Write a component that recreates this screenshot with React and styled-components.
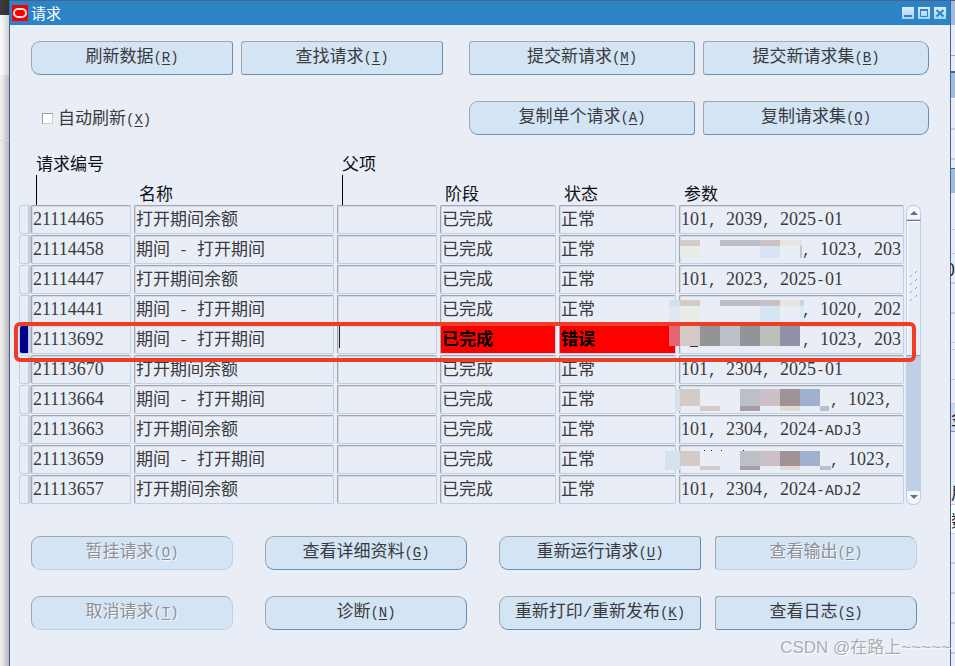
import React from "react";
import styled, { createGlobalStyle, css } from "styled-components";

const c = {
  face: "#e9eef6",
  title: "#2c84c4",
  edge: "#4a6194",
  pale: "#bfd0e6",
  gray: "#a4a6aa",
  button: "#d3e4f4",
  text: "#3a3a3e",
};

const GlobalStyle = createGlobalStyle`
  *, *::before, *::after { box-sizing: border-box; }
  body {
    margin: 0;
    overflow: hidden;
    background: ${c.face};
    color: ${c.text};
    font-family: "Noto Sans CJK SC", sans-serif;
    font-size: 17px;
  }
  button, input { font: inherit; color: inherit; }
`;

const Desktop = styled.div`
  position: relative;
  display: grid;
  grid-template-columns: 9px minmax(0, 1fr) 4px;
  height: 100vh;
  min-height: 640px;
  overflow: hidden;
`;

const LeftEdge = styled.div`
  display: flex;
  flex-direction: column;
  overflow: hidden;
`;

const Strip = styled.div`
  flex: ${(p) => (p.$h ? `0 0 ${p.$h}px` : "1")};
  background: linear-gradient(90deg, ${(p) => p.$color} 20%, ${(p) => p.$shade});
  border-bottom: ${(p) => (p.$line ? "1px solid #d6d6d6" : "0")};
`;

const RightEdge = styled.div`
  display: flex;
  flex-direction: column;
  overflow: hidden;
`;

const Band = styled.div`
  flex: 0 0 ${(p) => p.$h}px;
  overflow: hidden;
  background: ${(p) => p.$bg || c.face};
  border-bottom: ${(p) => p.$bw || 1}px solid ${(p) => p.$line || c.pale};
  color: #202024;
  direction: ${(p) => (p.$tail ? "rtl" : "ltr")};
  line-height: ${(p) => p.$h}px;
  white-space: nowrap;
`;

const Window = styled.main`
  display: flex;
  flex-direction: column;
  border: 1px solid ${c.edge};
  border-bottom: 0;
  background: ${c.face};
  overflow: hidden;
`;

const TitleBar = styled.header`
  display: flex;
  align-items: center;
  gap: 3px;
  height: 24px;
  padding: 0 4px 0 2px;
  background: ${c.title};
  color: #fff;
`;

const Title = styled.h1`
  flex: 1;
  margin: 0;
  font-size: 15px;
  font-weight: 400;
  line-height: 24px;
`;

const Controls = styled.div`
  display: flex;
  gap: 4px;
`;

const ControlButton = styled.button`
  display: block;
  width: 12px;
  height: 12px;
  padding: 0;
  border: 0;
  background: linear-gradient(#dceefb, #a4d2f1);
  svg { display: block; }
`;

const Toolbar = styled.div`
  display: flex;
  align-items: center;
  gap: 26px;
  margin-top: ${(p) => p.$top}px;
  padding: 0 21px;
`;

const Group = styled.div`
  display: flex;
  align-items: center;
  flex: ${(p) => p.$grow} 1 0;
  gap: 8px;
  min-width: 0;
`;

const corners = {
  left: "9px 3px 3px 9px",
  right: "3px 9px 9px 3px",
  all: "9px",
  none: "3px",
};

const PushButton = styled.button`
  flex: 1 1 0;
  min-width: 0;
  height: 34px;
  padding: 0 0 4px;
  border: 1px solid;
  border-color: ${c.gray} #6b8db2 #6b8db2 ${c.gray};
  border-radius: ${(p) => corners[p.$corners]};
  background: ${c.button};
  line-height: 26px;
  white-space: nowrap;
  &:disabled {
    border-color: ${c.gray} ${c.pale} ${c.pale} ${c.gray};
    color: #8d9096;
    text-shadow: 1px 1px 0 #f4f8fc;
  }
`;

const Latin = styled.span`
  font-family: "Liberation Mono", monospace;
  font-size: 15px;
`;

const Digits = styled.span`
  font-family: "Liberation Serif", serif;
  font-size: 18px;
`;

const Hotkey = styled.span`
  font-family: "Liberation Mono", monospace;
  font-size: 14px;
  u { text-underline-offset: 2px; }
`;

const CheckLabel = styled.label`
  display: flex;
  align-items: center;
  gap: 5px;
  padding-left: 11px;
  line-height: 26px;
`;

const CheckBox = styled.input`
  appearance: none;
  width: 11px;
  height: 11px;
  margin: 0;
  border: 1px solid;
  border-color: #9c9c9c #c8c8c8 #c8c8c8 #9c9c9c;
  background: #fff;
`;

const Block = styled.section`
  position: relative;
  display: flex;
  gap: 2px;
  margin-top: 15px;
  padding: 0 29px 0 9px;
`;

const Table = styled.table`
  flex: 1;
  width: 0;
  table-layout: fixed;
  border-collapse: collapse;
`;

const Col = styled.col`
  width: ${(p) => p.$w}px;
`;

const Head = styled.th`
  height: 55px;
  padding: 0 0 0 5px;
  vertical-align: bottom;
  color: #101014;
  font-weight: 400;
  line-height: 24px;
  text-align: left;
  white-space: nowrap;
`;

const Stem = styled.span`
  display: block;
  width: 1px;
  height: 30px;
  background: #000;
`;

const Cell = styled.td`
  position: relative;
  height: 30px;
  padding: 0 ${(p) => (p.$last ? 0 : 3)}px 1px 0;
  vertical-align: top;
`;

const Field = styled.div`
  height: 29px;
  padding: 0 0 0 ${(p) => p.$indent || 1}px;
  overflow: hidden;
  border: 1px solid;
  border-color: ${c.gray} ${c.pale} ${c.pale} ${c.gray};
  border-radius: 2px;
  box-shadow: inset 1px 1px 0 #cfdbea;
  line-height: 24px;
  white-space: pre;
  ${(p) =>
    p.$error &&
    css`
      background: #f00;
      box-shadow: none;
      color: #000;
      font-weight: 700;
    `}
`;

const Selector = styled.div`
  height: 29px;
  border: 1px solid ${c.pale};
  border-right-width: 3px;
  border-radius: 3px;
  background: ${(p) => (p.$current ? "#00008b" : c.face)};
`;

const Caret = styled.span`
  display: block;
  width: 1px;
  height: 22px;
  background: #222;
`;

const Mosaic = styled.svg`
  position: absolute;
  top: 0;
  left: -15px;
  z-index: 1;
  pointer-events: none;
`;

const Highlight = styled.div`
  position: absolute;
  top: 172px;
  right: 34px;
  left: 4px;
  z-index: 2;
  height: 40px;
  border: 4px solid #ee3d26;
  border-radius: 6px;
  pointer-events: none;
`;

const ScrollBar = styled.div`
  display: flex;
  flex-direction: column;
  width: 15px;
  margin-top: 55px;
  border-radius: 7px;
  background: ${c.pale};
`;

const ScrollButton = styled.button`
  display: flex;
  align-items: center;
  justify-content: center;
  height: 15px;
  padding: 0;
  border: 1px solid ${c.pale};
  border-radius: ${(p) => (p.$end ? "2px 2px 7px 7px" : "7px 7px 0 0")};
  background: #f3f6fb;
`;

const Thumb = styled.div`
  display: flex;
  align-items: center;
  justify-content: center;
  height: 136px;
  border: 1px solid ${c.pale};
  border-top-color: #73738f;
  border-bottom-color: #8da6c8;
  background: ${c.face};
  box-shadow: inset 1px 1px 0 #fff;
`;

const Track = styled.div`
  flex: 1;
`;

const Footer = styled.div`
  display: grid;
  grid-template-columns: 234fr 234fr 216fr 202fr;
  row-gap: 26px;
  margin-top: 31px;
  padding: 0 33px 0 21px;
`;

const Slot = styled.div`
  display: flex;
  padding-right: ${(p) => p.$space}px;
`;

const Watermark = styled.div`
  position: absolute;
  right: 4px;
  bottom: 5px;
  z-index: 3;
  color: #a9adb4;
  font-family: "Liberation Sans", "Noto Sans CJK SC", sans-serif;
  font-size: 17px;
  line-height: 26px;
  text-shadow: 1px 1px 0 #fff;
  white-space: nowrap;
`;

function Button({ label, hotkey, corners: shape = "all", disabled }) {
  return (
    <PushButton type="button" $corners={shape} disabled={disabled}>
      <Mixed text={label} />
      <Hotkey>
        (<u>{hotkey}</u>)
      </Hotkey>
    </PushButton>
  );
}

// Digits, other ASCII characters and Chinese text each get their own face.
function Mixed({ text }) {
  return text.match(/[0-9]+|[^0-9\u0080-\uffff]+|[\u0080-\uffff]+/g).map((part, i) => {
    if (/^[0-9]/.test(part)) return <Digits key={i}>{part}</Digits>;
    if (/^[\x20-\x7e]/.test(part)) return <Latin key={i}>{part}</Latin>;
    return part;
  });
}

// Each block: x, y, width, height, colour.
const faint = [
  [16, 5, 20, 6, "#d4cac8"],
  [16, 11, 20, 12, "#e8ede6"],
  [56, 5, 40, 6, "#bcc0c6"],
  [96, 5, 20, 6, "#cbc0c6"],
  [116, 5, 20, 6, "#e8e6e0"],
  [96, 11, 20, 12, "#d5e5f4"],
];

const mosaics = {
  a: [...faint, [136, 5, 2, 6, "#d3e5f1"], [136, 11, 2, 12, "#cbbdd2"]],
  b: [
    ...faint,
    [16, 23, 20, 4, "#e8ede6"],
    [96, 23, 20, 4, "#d5e5f4"],
    [5, 5, 11, 6, "#d3e0ec"],
    [5, 11, 11, 16, "#dfe6f0"],
    [136, 5, 4, 6, "#c5d6ea"],
    [136, 11, 4, 16, "#dbebf4"],
  ],
  c: [
    [5, 1, 11, 20, "#e36670"],
    [16, 1, 20, 20, "#d4c9c7"],
    [36, 1, 20, 20, "#939497"],
    [56, 1, 20, 20, "#bcc0c7"],
    [76, 1, 20, 20, "#939497"],
    [96, 1, 20, 20, "#bdc0b9"],
    [116, 1, 20, 20, "#9191aa"],
    [26, 21, 8, 1, "#333"],
  ],
  d: [
    [11, 4, 5, 22, "#d5e1ec"],
    [16, 4, 20, 17, "#d4cac8"],
    [36, 21, 20, 5, "#d5cac8"],
    [76, 4, 20, 17, "#bcc0c6"],
    [76, 21, 20, 5, "#a89ba8"],
    [96, 4, 20, 17, "#cbc0c6"],
    [116, 4, 20, 17, "#9f9397"],
    [116, 21, 20, 5, "#e2d9cf"],
    [136, 4, 20, 17, "#a0b0cf"],
    [156, 21, 9, 5, "#bcc0c6"],
  ],
  e: [
    [1, 6, 15, 19, "#d5e1ec"],
    [16, 6, 20, 15, "#d4cac8"],
    [36, 21, 20, 4, "#d5cac8"],
    [76, 6, 20, 15, "#bcc0c6"],
    [76, 21, 20, 4, "#a89ba8"],
    [96, 6, 20, 15, "#cbc0c6"],
    [116, 6, 20, 15, "#9f9397"],
    [116, 21, 20, 4, "#e2d9cf"],
    [136, 6, 20, 15, "#a0b0cf"],
    [156, 21, 11, 4, "#bcc0c6"],
    [40, 5, 1, 1, "#222"],
    [47, 5, 1, 1, "#222"],
    [57, 5, 1, 1, "#222"],
    [79, 5, 1, 1, "#222"],
  ],
};

const balance = "打开期间余额";
const period = "期间 - 打开期间";

const rows = [
  { id: "21114465", name: balance, params: "101, 2039, 2025-01" },
  { id: "21114458", name: period, params: ", 1023, 203", indent: 122, mask: "a" },
  { id: "21114447", name: balance, params: "101, 2023, 2025-01" },
  { id: "21114441", name: period, params: ", 1020, 202", indent: 122, mask: "b" },
  { id: "21113692", name: period, params: ", 1023, 203", indent: 122, mask: "c", error: true },
  { id: "21113670", name: balance, params: "101, 2304, 2025-01" },
  { id: "21113664", name: period, params: ", 1023,", indent: 150, mask: "d" },
  { id: "21113663", name: balance, params: "101, 2304, 2024-ADJ3" },
  { id: "21113659", name: period, params: ", 1023,", indent: 150, mask: "e" },
  { id: "21113657", name: balance, params: "101, 2304, 2024-ADJ2" },
];

const bands = [
  { h: 1, line: c.edge },
  { h: 24, bg: "#9dbcdf", line: "#9dbcdf" },
  { h: 31, line: c.gray },
  { h: 17, line: c.edge, bw: 2 },
  { h: 26, bg: "#9dbcdf", line: "#fff" },
  { h: 31, bw: 2 },
  { h: 30, bw: 2 },
  { h: 9, line: c.edge },
  { h: 24, bg: "#9dbcdf", line: "#9dbcdf" },
  { h: 37 },
  { h: 24 },
  { h: 30, bw: 2, text: "0", tail: true },
  { h: 30, bw: 2 },
  { h: 29 },
  { h: 7 },
  { h: 30 },
  { h: 24 },
  { h: 28, bg: "#cbdaed", line: "#7f97bd", text: "金" },
  { h: 46, line: c.face },
  { h: 27, text: "用" },
  { h: 29, bg: "#fff", text: "数" },
  { h: 30, bw: 2 },
  { h: 30, bw: 2 },
  { h: 30, bw: 2 },
  { h: 30, bw: 2 },
  { h: 30, bw: 2 },
];

const cols = [12, 103, 203, 103, 119, 120];

export default function App() {
  return (
    <Desktop>
      <GlobalStyle />
      <LeftEdge>
        <Strip $h={15} $color="#3b3b3b" $shade="#303030" />
        <Strip $h={60} $color="#f8f8f8" $shade="#d0d0d0" />
        <Strip $h={66} $color="#ededed" $shade="#b8b8ba" $line />
        <Strip $color="#ebebeb" $shade="#b4b4b8" />
      </LeftEdge>

      <Window>
        <TitleBar>
          <svg width="16" height="16" viewBox="0 0 16 16" aria-hidden="true">
            <rect width="16" height="16" fill="#f80000" />
            <rect x="2" y="4" width="12" height="8" rx="4" fill="none" stroke="#ffe4e4" strokeWidth="2" />
          </svg>
          <Title>请求</Title>
          <Controls>
            <ControlButton type="button" aria-label="最小化">
              <svg width="12" height="12"><path d="M2 9h8" stroke={c.title} strokeWidth="2" /></svg>
            </ControlButton>
            <ControlButton type="button" aria-label="最大化">
              <svg width="12" height="12">
                <path d="M2.5 3h7v6.5h-7z" fill="none" stroke={c.title} />
                <path d="M2 3h8" stroke={c.title} strokeWidth="2" />
              </svg>
            </ControlButton>
            <ControlButton type="button" aria-label="关闭">
              <svg width="12" height="12">
                <path d="M2.5 3l7 6.5M9.5 3l-7 6.5" stroke={c.title} strokeWidth="2" />
              </svg>
            </ControlButton>
          </Controls>
        </TitleBar>

        <Toolbar $top={16}>
          <Group $grow={412}>
            <Button label="刷新数据" hotkey="R" corners="left" />
            <Button label="查找请求" hotkey="I" corners="none" />
          </Group>
          <Group $grow={460}>
            <Button label="提交新请求" hotkey="M" corners="none" />
            <Button label="提交新请求集" hotkey="B" corners="right" />
          </Group>
        </Toolbar>
        <Toolbar $top={26}>
          <Group $grow={412}>
            <CheckLabel>
              <CheckBox type="checkbox" />
              <span>
                自动刷新
                <Hotkey>
                  (<u>X</u>)
                </Hotkey>
              </span>
            </CheckLabel>
          </Group>
          <Group $grow={460}>
            <Button label="复制单个请求" hotkey="A" corners="left" />
            <Button label="复制请求集" hotkey="Q" corners="right" />
          </Group>
        </Toolbar>

        <Block>
          <Table>
            <colgroup>
              {cols.map((w, i) => (
                <Col key={i} $w={w} />
              ))}
              <col />
            </colgroup>
            <thead>
              <tr>
                <Head aria-label="当前行" />
                <Head>
                  请求编号
                  <Stem />
                </Head>
                <Head>名称</Head>
                <Head>
                  父项
                  <Stem />
                </Head>
                <Head>阶段</Head>
                <Head>状态</Head>
                <Head>参数</Head>
              </tr>
            </thead>
            <tbody>
              {rows.map((r) => (
                <tr key={r.id}>
                  <Cell $last>
                    <Selector $current={r.error} />
                  </Cell>
                  <Cell>
                    <Field><Mixed text={r.id} /></Field>
                  </Cell>
                  <Cell>
                    <Field><Mixed text={r.name} /></Field>
                  </Cell>
                  <Cell>
                    <Field>{r.error && <Caret />}</Field>
                  </Cell>
                  <Cell>
                    <Field $error={r.error}>已完成</Field>
                  </Cell>
                  <Cell>
                    <Field $error={r.error}>{r.error ? "错误" : "正常"}</Field>
                  </Cell>
                  <Cell $last>
                    <Field $indent={r.indent}><Mixed text={r.params} /></Field>
                    {r.mask && (
                      <Mosaic width="170" height="30" aria-hidden="true">
                        {mosaics[r.mask].map(([x, y, w, h, fill], i) => (
                          <rect key={i} x={x} y={y} width={w} height={h} fill={fill} />
                        ))}
                      </Mosaic>
                    )}
                  </Cell>
                </tr>
              ))}
            </tbody>
          </Table>
          <ScrollBar>
            <ScrollButton type="button" aria-label="向上滚动">
              <svg width="8" height="5"><path d="M0 5l4-4 4 4z" fill="#6a6a86" /></svg>
            </ScrollButton>
            <Thumb>
              <svg width="9" height="36" aria-hidden="true">
                {[0, 8, 16, 24].map((y) => (
                  <g key={y} strokeWidth="1">
                    <path d={`M1 ${y + 7}l2-2M6 ${y + 3}l2-2`} stroke="#8da6c8" />
                    <path d={`M0 ${y + 5}l2-2M5 ${y + 1}l1-1`} stroke="#fff" />
                  </g>
                ))}
              </svg>
            </Thumb>
            <Track />
            <ScrollButton type="button" aria-label="向下滚动" $end>
              <svg width="8" height="5"><path d="M0 0h8l-4 4z" fill="#6a6a86" /></svg>
            </ScrollButton>
          </ScrollBar>
          <Highlight />
        </Block>

        <Footer>
          <Slot $space={32}><Button label="暂挂请求" hotkey="O" disabled /></Slot>
          <Slot $space={32}><Button label="查看详细资料" hotkey="G" /></Slot>
          <Slot $space={14}><Button label="重新运行请求" hotkey="U" corners="left" /></Slot>
          <Slot $space={0}><Button label="查看输出" hotkey="P" corners="right" disabled /></Slot>
          <Slot $space={32}><Button label="取消请求" hotkey="T" disabled /></Slot>
          <Slot $space={32}><Button label="诊断" hotkey="N" /></Slot>
          <Slot $space={14}><Button label="重新打印/重新发布" hotkey="K" corners="left" /></Slot>
          <Slot $space={0}><Button label="查看日志" hotkey="S" corners="right" /></Slot>
        </Footer>
      </Window>

      <RightEdge aria-hidden="true">
        {bands.map((b, i) => (
          <Band key={i} $h={b.h} $bg={b.bg} $line={b.line} $bw={b.bw} $tail={b.tail}>
            {b.text}
          </Band>
        ))}
      </RightEdge>
      <Watermark>CSDN @在路上~~~~~</Watermark>
    </Desktop>
  );
}
